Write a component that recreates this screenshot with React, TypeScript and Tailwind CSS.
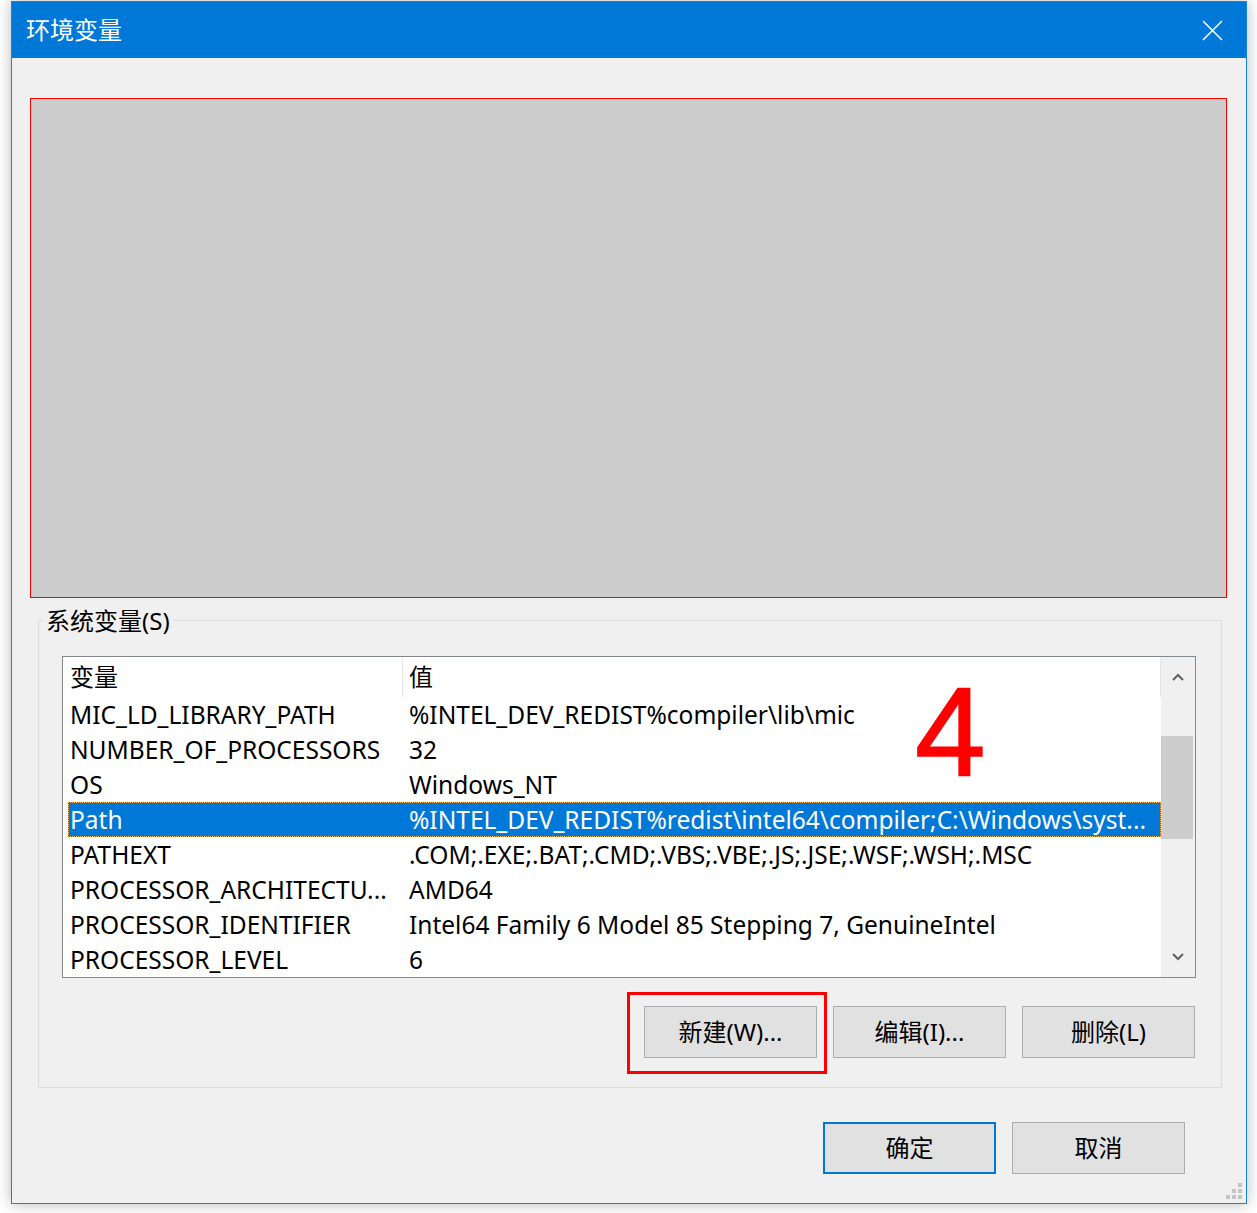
import React from 'react';

const rows: [string, string][] = [
  ['MIC_LD_LIBRARY_PATH', '%INTEL_DEV_REDIST%compiler\\lib\\mic'],
  ['NUMBER_OF_PROCESSORS', '32'],
  ['OS', 'Windows_NT'],
  ['Path', '%INTEL_DEV_REDIST%redist\\intel64\\compiler;C:\\Windows\\syst...'],
  ['PATHEXT', '.COM;.EXE;.BAT;.CMD;.VBS;.VBE;.JS;.JSE;.WSF;.WSH;.MSC'],
  ['PROCESSOR_ARCHITECTU...', 'AMD64'],
  ['PROCESSOR_IDENTIFIER', 'Intel64 Family 6 Model 85 Stepping 7, GenuineIntel'],
  ['PROCESSOR_LEVEL', '6'],
];

const font = "font-['Noto_Sans','Noto_Sans_CJK_SC',sans-serif]";

const Button: React.FC<{ label: string; primary?: boolean }> = ({ label, primary }) => (
  <div
    className={`w-[173px] h-[52px] flex items-center justify-center bg-[#e1e1e1] text-[24px] text-black ${
      primary ? 'border-2 border-[#0078d7]' : 'border border-[#adadad]'
    }`}
  >
    {label}
  </div>
);

const App: React.FC = () => {
  return (
    <div className={`w-[1257px] h-[1213px] bg-white overflow-hidden ${font}`}>
      {/* Dialog window */}
      <div className="relative ml-[11px] mt-[1px] w-[1236px] h-[1203px] border border-[#1883d7] bg-[#f0f0f0] shadow-[0_0_14px_rgba(0,0,0,0.28)] flex flex-col">
        {/* Title bar */}
        <div className="h-[56px] bg-[#0078d7] flex items-center justify-between pl-[14px] pr-[23px] shrink-0">
          <span className="text-white text-[24px] leading-none">环境变量</span>
          <svg width="21" height="21" viewBox="0 0 21 21" fill="none" stroke="white" strokeWidth="1.6">
            <path d="M1 1 L20 20 M20 1 L1 20" />
          </svg>
        </div>

        {/* User variables placeholder (greyed out) */}
        <div className="ml-[18px] mt-[40px] w-[1197px] h-[500px] bg-[#cccccc] border border-[#ff0000]" />

        {/* System variables group */}
        <div className="relative ml-[26px] mt-[22px] w-[1184px] border border-[#dcdcdc] flex flex-col pb-[29px]">
          <span className="absolute left-[4px] top-[-16px] px-[3px] bg-[#f0f0f0] text-[24px] leading-[32px] text-black">
            系统变量(S)
          </span>

          {/* List view */}
          <div className="relative ml-[23px] mt-[35px] w-[1134px] h-[322px] border border-[#828790] bg-white flex">
            <div className="flex-1 flex flex-col min-w-0 overflow-hidden">
              {/* Header */}
              <div className="h-[40px] flex items-stretch shrink-0">
                <div className="w-[339px] pl-[7px] flex items-center text-[24px] text-black">变量</div>
                <div className="w-px h-[39px] bg-[#e5e5e5] mt-px" />
                <div className="flex-1 pl-[6px] flex items-center text-[24px] text-black">值</div>
                <div className="w-px h-[39px] bg-[#e5e5e5] mt-px" />
              </div>
              {/* Rows */}
              {rows.map(([name, value]) => {
                const selected = name === 'Path';
                return (
                  <div
                    key={name}
                    className={`ml-[5px] h-[35px] shrink-0 flex items-center pl-[2px] pt-[2px] text-[24.5px] whitespace-nowrap ${
                      selected
                        ? 'bg-[#0078d7] text-white outline-1 outline-dotted outline-[#f7b35a] -outline-offset-1'
                        : 'text-black'
                    }`}
                  >
                    <span className="w-[339px] shrink-0 overflow-hidden">{name}</span>
                    <span className="overflow-hidden">{value}</span>
                  </div>
                );
              })}
            </div>

            {/* Scrollbar */}
            <div className="w-[34px] bg-[#f0f0f0] flex flex-col items-center shrink-0">
              <div className="h-[40px] flex items-center justify-center">
                <svg width="12" height="8" viewBox="0 0 12 8" fill="none" stroke="#606060" strokeWidth="2">
                  <path d="M1 7 L6 2 L11 7" />
                </svg>
              </div>
              <div className="mt-[39px] w-[32px] h-[103px] bg-[#cdcdcd] self-start" />
              <div className="flex-1" />
              <div className="h-[40px] flex items-center justify-center">
                <svg width="12" height="8" viewBox="0 0 12 8" fill="none" stroke="#606060" strokeWidth="2">
                  <path d="M1 1 L6 6 L11 1" />
                </svg>
              </div>
            </div>

            {/* Annotation */}
            <span className="absolute left-[852px] top-[2px] font-['Liberation_Sans',sans-serif] text-[127px] leading-[146px] text-[#ff0000] [-webkit-text-stroke:1.5px_#ff0000]">
              4
            </span>
          </div>

          {/* Group buttons */}
          <div className="mt-[28px] mr-[26px] flex justify-end gap-[16px]">
            <div className="relative">
              <Button label="新建(W)..." />
              <div className="absolute -left-[17px] -top-[14px] w-[200px] h-[82px] border-[3px] border-[#ff0000]" />
            </div>
            <Button label="编辑(I)..." />
            <Button label="删除(L)" />
          </div>
        </div>

        {/* Dialog buttons */}
        <div className="mt-[34px] mr-[61px] flex justify-end gap-[16px]">
          <Button label="确定" primary />
          <Button label="取消" />
        </div>

        {/* Resize grip */}
        <div className="absolute right-[4px] bottom-[4px] grid grid-cols-3 gap-[2px]">
          <div className="w-[4px] h-[4px]" />
          <div className="w-[4px] h-[4px]" />
          <div className="w-[4px] h-[4px] bg-[#c4c4c4]" />
          <div className="w-[4px] h-[4px]" />
          <div className="w-[4px] h-[4px] bg-[#c4c4c4]" />
          <div className="w-[4px] h-[4px] bg-[#c4c4c4]" />
          <div className="w-[4px] h-[4px] bg-[#c4c4c4]" />
          <div className="w-[4px] h-[4px] bg-[#c4c4c4]" />
          <div className="w-[4px] h-[4px] bg-[#c4c4c4]" />
        </div>
      </div>
    </div>
  );
};

export default App;
